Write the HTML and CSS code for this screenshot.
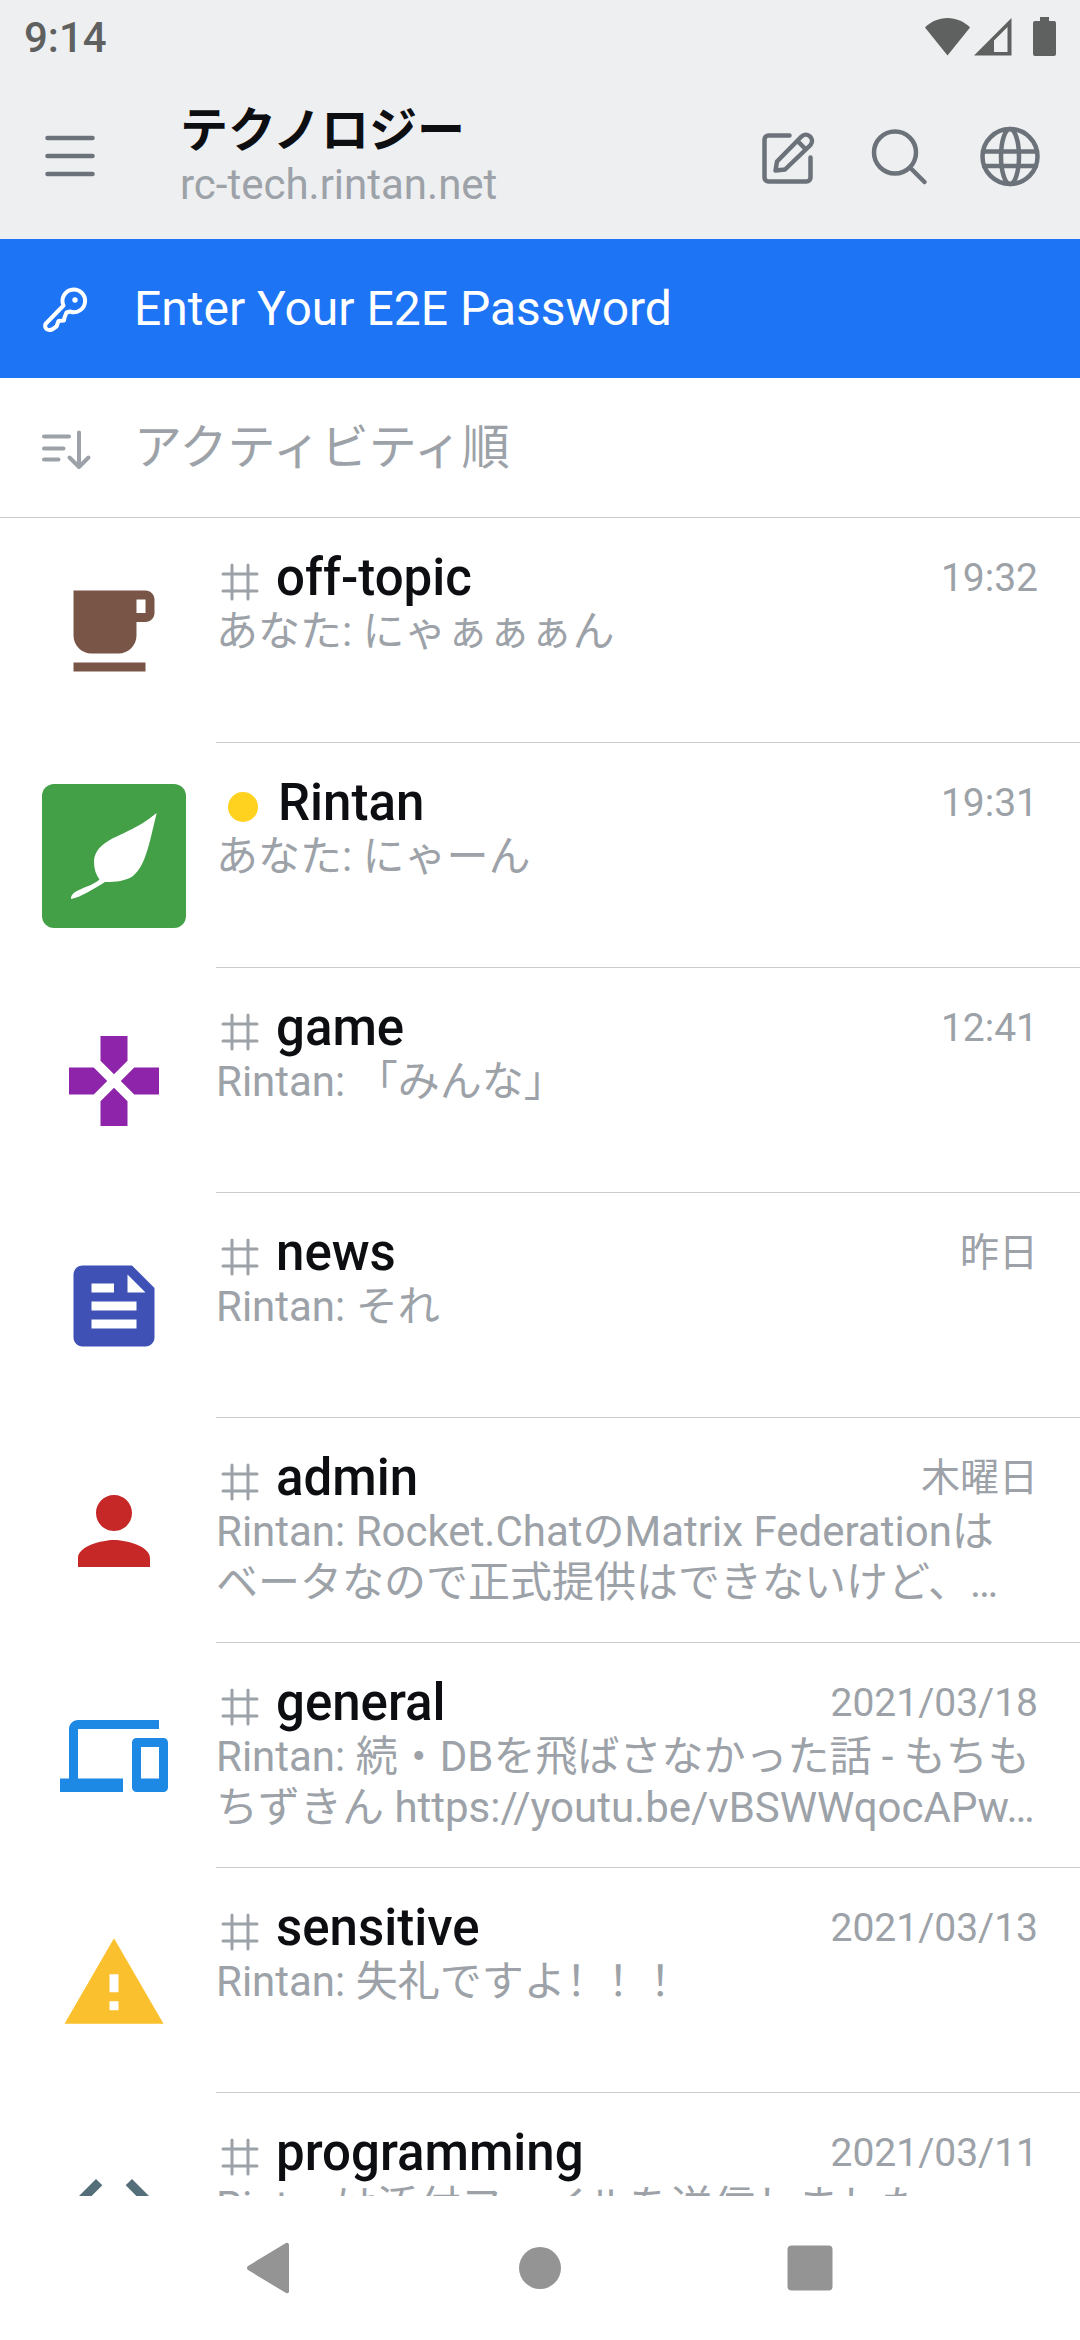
FILE: index.html
```html
<!DOCTYPE html>
<html lang="ja">
<head>
    <meta charset="UTF-8">
    <meta name="viewport" content="width=device-width, initial-scale=1.0">
    <title>テクノロジー</title>
    <link rel="stylesheet" href="styles.css">
</head>
<body>

<!-- shared # icon for channels -->
<svg class="defs" width="0" height="0" aria-hidden="true">
    <symbol id="hash" viewBox="0 0 48 48">
        <path d="M16 7v34M32 7v34M7 16h34M7 33h34" fill="none" stroke="#9ca2a8" stroke-width="3" stroke-linecap="round"/>
    </symbol>
</svg>

<div class="statusbar">
    <span class="clock">9:14</span>
    <div class="status-icons">
        <svg width="45" height="38" viewBox="0 0 45 38"><path d="M0 9.500C6 3.500 14 0 22.500 0S39 3.500 45 9.500L22.500 37.500z" fill="#5f6160"/></svg>
        <svg width="38" height="38" viewBox="0 0 38 38"><path d="M0 37.500L37.500 0v37.500zM33.500 9L20 22.500v11.500h13.500z" fill="#5f6160" fill-rule="evenodd"/></svg>
        <svg class="battery" width="23" height="39" viewBox="0 0 23 39"><path d="M7 0h9v4h5a2 2 0 0 1 2 2v31a2 2 0 0 1-2 2H2a2 2 0 0 1-2-2V6a2 2 0 0 1 2-2h5z" fill="#5f6160"/></svg>
    </div>
</div>

<header class="header">
    <button class="icon-btn menu" type="button" aria-label="メニュー">
        <svg viewBox="0 0 72 72"><path d="M13.500 18h45M13.500 36h45M13.500 54h45"/></svg>
    </button>
    <div class="server">
        <h1>テクノロジー</h1>
        <p>rc-tech.rintan.net</p>
    </div>
    <div class="actions">
        <button class="icon-btn" type="button" aria-label="新規作成">
            <svg viewBox="0 0 72 72"><path d="M37.500 15.500H16.500a4 4 0 0 0-4 4V57.500a4 4 0 0 0 4 4H54.500a4 4 0 0 0 4-4V37.500M23.500 50.500L25 41.500 49.500 16.500C55 11 63.500 19 58.500 25L33 49.500zM46 21.500l7.500 7.500"/></svg>
        </button>
        <button class="icon-btn" type="button" aria-label="検索">
            <svg viewBox="0 0 72 72"><circle cx="32" cy="32.500" r="21"/><path d="M47.500 48L61.500 62"/></svg>
        </button>
        <button class="icon-btn" type="button" aria-label="ディレクトリ">
            <svg viewBox="0 0 72 72"><circle cx="36" cy="36.500" r="27.500"/><ellipse cx="36" cy="36.500" rx="9" ry="27.500"/><path d="M10 31.500h52M10 46h52"/></svg>
        </button>
    </div>
</header>

<button class="bar banner" type="button">
    <svg viewBox="0 0 72 72">
        <path d="M33.500 32.500A11.300 11.300 0 1 1 40 38.500L36.500 39.500 34.500 44.500 34 47.500 28.500 48 26.500 53.500 22 56.500C17.500 58 14 55.500 15.500 51z"/>
        <circle class="dot" cx="45" cy="27" r="2.700"/>
    </svg>
    <span>Enter Your E2E Password</span>
</button>
<button class="bar sort" type="button">
    <svg viewBox="0 0 72 72"><path d="M14 24.500h25M14 36.500h19.500M14 47.500h14.500M49 20.500v34M39.500 45.500l9.500 9.500 9.500-9.500"/></svg>
    <span>アクティビティ順</span>
</button>

<ul class="rooms">
    <li><a class="room" href="#off-topic">
        <svg class="avatar" viewBox="-3 -4 32 32"><path fill="#795548" d="M20 3H4v10c0 2.210 1.790 4 4 4h6c2.210 0 4-1.790 4-4v-3h2c1.110 0 2-.9 2-2V5c0-1.110-.89-2-2-2zm0 5h-2V5h2v3zM4 19h16v2H4z"/></svg>
        <div class="info">
            <div class="title"><svg class="type"><use href="#hash"/></svg><h2>off-topic</h2><time>19:32</time></div>
            <p>あなた: にゃぁぁぁん</p>
        </div>
    </a></li>
    <li><a class="room" href="#rintan">
        <svg class="avatar leaf" viewBox="0 0 144 144"><path fill="#fff" d="M114.700 29C95 45 78 50 67 56.500 56 63 52 70 52 78c0 7 2 13 5.500 17.500C51 101 43 103 37 106c-6 3-8 5-8 9 10-2 21-9 34-17 11 0 21-1 28-6 13-11 16-32 23.700-63z"/></svg>
        <div class="info">
            <div class="title"><span class="type away"></span><h2>Rintan</h2><time>19:31</time></div>
            <p>あなた: にゃーん</p>
        </div>
    </a></li>
    <li><a class="room" href="#game">
        <svg class="avatar" viewBox="-4 -4 32 32"><path fill="#8e24aa" d="M15 7.500V2H9v5.500l3 3 3-3zM7.500 9H2v6h5.500l3-3-3-3zM9 16.500V22h6v-5.500l-3-3-3 3zM16.500 9l-3 3 3 3H22V9h-5.500z"/></svg>
        <div class="info">
            <div class="title"><svg class="type"><use href="#hash"/></svg><h2>game</h2><time>12:41</time></div>
            <p>Rintan: 「みんな」</p>
        </div>
    </a></li>
    <li><a class="room" href="#news">
        <svg class="avatar" viewBox="-4 -4 32 32"><path fill="#3f51b5" d="M16 3H5c-1.100 0-2 .9-2 2v14c0 1.100.9 2 2 2h14c1.100 0 2-.9 2-2V8l-5-5zM7 7h5v2H7V7zm10 10H7v-2h10v2zm0-4H7v-2h10v2zm-2-4V5l4 4h-4z"/></svg>
        <div class="info">
            <div class="title"><svg class="type"><use href="#hash"/></svg><h2>news</h2><time>昨日</time></div>
            <p>Rintan: それ</p>
        </div>
    </a></li>
    <li><a class="room" href="#admin">
        <svg class="avatar" viewBox="-4 -4 32 32"><path fill="#c62828" d="M12 12c2.210 0 4-1.790 4-4s-1.790-4-4-4-4 1.790-4 4 1.790 4 4 4zm0 2c-2.670 0-8 1.340-8 4v2h16v-2c0-2.660-5.330-4-8-4z"/></svg>
        <div class="info">
            <div class="title"><svg class="type"><use href="#hash"/></svg><h2>admin</h2><time>木曜日</time></div>
            <p>Rintan: Rocket.ChatのMatrix Federationはベータなので正式提供はできないけど、…</p>
        </div>
    </a></li>
    <li><a class="room" href="#general">
        <svg class="avatar" viewBox="-4 -4 32 32"><path fill="#1e88e5" d="M4 6h18V4H4c-1.100 0-2 .9-2 2v11H0v3h14v-3H4V6zm19 2h-6c-.55 0-1 .45-1 1v10c0 .55.450 1 1 1h6c.55 0 1-.45 1-1V9c0-.55-.45-1-1-1zm-1 9h-4v-7h4v7z"/></svg>
        <div class="info">
            <div class="title"><svg class="type"><use href="#hash"/></svg><h2>general</h2><time>2021/03/18</time></div>
            <p>Rintan: 続・DBを飛ばさなかった話 - もちもちずきん https://youtu.be/vBSWWqocAPw…</p>
        </div>
    </a></li>
    <li><a class="room" href="#sensitive">
        <svg class="avatar" viewBox="-4 -4.500 32 32"><path fill="#fbc02d" d="M1 21h22L12 2 1 21zm12-3h-2v-2h2v2zm0-4h-2v-4h2v4z"/></svg>
        <div class="info">
            <div class="title"><svg class="type"><use href="#hash"/></svg><h2>sensitive</h2><time>2021/03/13</time></div>
            <p>Rintan: 失礼ですよ<span class="marks" lang="zh-CN">！！！</span></p>
        </div>
    </a></li>
    <li><a class="room" href="#programming">
        <svg class="avatar" viewBox="-4 -4 32 32"><path fill="#546e7a" d="M9.400 16.600L4.800 12l4.600-4.600L8 6l-6 6 6 6 1.400-1.400zm5.200 0l4.600-4.600-4.600-4.600L16 6l6 6-6 6-1.400-1.400z"/></svg>
        <div class="info">
            <div class="title"><svg class="type"><use href="#hash"/></svg><h2>programming</h2><time>2021/03/11</time></div>
            <p>Rintanは添付ファイルを送信しました</p>
        </div>
    </a></li>
</ul>

<nav class="navbar">
    <button type="button" aria-label="戻る"><svg viewBox="0 0 54 54"><path d="M46 3.500v47a2 2 0 0 1-3 1.500L5 29a2.500 2.500 0 0 1 0-4L43 2a2 2 0 0 1 3 1.500z"/></svg></button>
    <button type="button" aria-label="ホーム"><svg viewBox="0 0 54 54"><circle cx="27" cy="27" r="21"/></svg></button>
    <button type="button" aria-label="履歴"><svg viewBox="0 0 54 54"><rect x="4.500" y="4.500" width="45" height="45" rx="4"/></svg></button>
</nav>

</body>
</html>
```
FILE: styles.css
```css
* {
    box-sizing: border-box;
}
body {
    margin: 0;
    height: 100vh;
    display: flex;
    flex-direction: column;
    background: #fff;
    color: #0d0e12;
    font-family: Roboto, "Noto Sans CJK JP", sans-serif;
}
h1, h2, p, ul {
    margin: 0;
    padding: 0;
}
svg {
    display: block;
    flex: none;
}
button {
    border: none;
    padding: 0;
    background: none;
    font-family: inherit;
    cursor: pointer;
}
.defs {
    position: absolute;
}

/* status bar */
.statusbar {
    flex: none;
    height: 72px;
    padding: 0 24px;
    display: flex;
    justify-content: space-between;
    align-items: center;
    background: #eeeff1;
}
.clock {
    padding-top: 3px;
    font-size: 42px;
    font-weight: 500;
    color: #5f6160;
}
.status-icons {
    display: flex;
    align-items: flex-end;
    gap: 4px;
}
.battery {
    margin-left: 17px;
}

/* header */
.header {
    flex: none;
    height: 167px;
    padding: 0 34px;
    display: flex;
    align-items: center;
    background: #eeeff1;
}
.icon-btn svg {
    width: 72px;
    height: 72px;
    fill: none;
    stroke: #6c727a;
    stroke-width: 4.5;
    stroke-linecap: round;
    stroke-linejoin: round;
}
.menu {
    margin-right: 74px;
}
.server {
    flex: 1;
}
.server h1 {
    font-size: 48px;
    line-height: 58px;
    font-weight: 700;
}
.server p {
    font-size: 42px;
    line-height: 50px;
    color: #9ca2a8;
}
.actions {
    display: flex;
    gap: 39px;
}

/* full width bars */
.bar {
    flex: none;
    height: 139px;
    padding: 0 30px;
    display: flex;
    align-items: center;
    gap: 32px;
    font-size: 48px;
    line-height: 58px;
    text-align: left;
}
.bar svg {
    width: 72px;
    height: 72px;
    fill: none;
    stroke: currentColor;
    stroke-width: 4;
    stroke-linecap: round;
    stroke-linejoin: round;
}
.bar .dot {
    fill: currentColor;
    stroke: none;
}
.banner {
    background: #1d74f5;
    color: #fff;
}
.sort {
    height: 140px;
    border-bottom: 1px solid #cbcbcc;
    color: #9ca2a8;
}

/* room list */
.rooms {
    flex: 1;
    min-height: 0;
    overflow: hidden;
    list-style: none;
}
.room {
    height: 225px;
    padding-left: 42px;
    display: flex;
    align-items: center;
    gap: 30px;
    color: inherit;
    text-decoration: none;
}
.avatar {
    width: 144px;
    height: 144px;
    border-radius: 12px;
}
.leaf {
    background: #43a047;
}
.info {
    flex: 1;
    min-width: 0;
    height: 100%;
    padding: 32px 42px 0 0;
    border-bottom: 1px solid #cbcbcc;
}
.title {
    display: flex;
    align-items: flex-end;
}
.type {
    width: 48px;
    height: 48px;
    margin-right: 12px;
    flex: none;
}
.away {
    margin: 0 11px 0 3px;
    border: 9px solid transparent;
    border-radius: 50%;
    background: #ffd21f padding-box;
}
.title h2 {
    flex: 1;
    font-size: 51px;
    line-height: 56px;
    font-weight: 500;
}
.title time {
    font-size: 39px;
    line-height: 56px;
    color: #9ca2a8;
}
.info p {
    display: -webkit-box;
    -webkit-box-orient: vertical;
    -webkit-line-clamp: 2;
    overflow: hidden;
    font-size: 42px;
    line-height: 51px;
    line-break: strict;
    color: #9ca2a8;
}
.marks {
    font-family: Roboto, "Noto Sans CJK SC", sans-serif;
}

/* android navigation */
.navbar {
    flex: none;
    height: 144px;
    padding: 0 12.5%;
    display: flex;
    background: #fff;
}
.navbar button {
    flex: 1;
    display: flex;
    align-items: center;
    justify-content: center;
}
.navbar svg {
    width: 54px;
    height: 54px;
    fill: #949494;
}
```
